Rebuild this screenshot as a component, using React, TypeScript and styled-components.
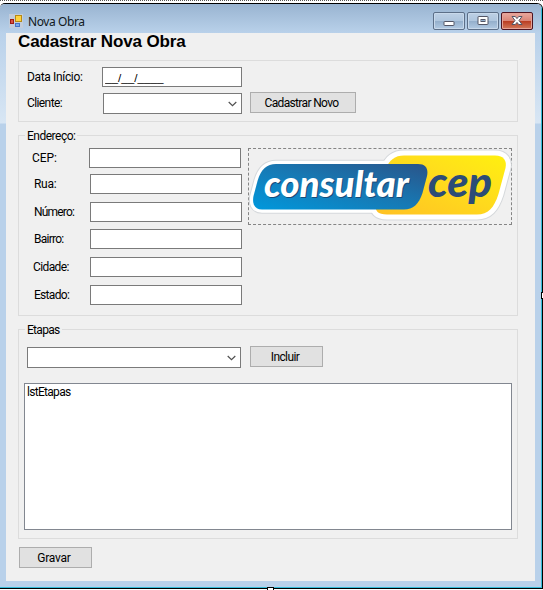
import React from "react";
import styled, { createGlobalStyle } from "styled-components";

const GlobalStyle = createGlobalStyle`
  * { box-sizing: border-box; }
  body { margin: 0; background: #fff; overflow: hidden; }
`;

const Designer = styled.div`
  position: relative;
  width: 543px;
  height: 590px;
  padding-top: 3px;
  background: #fff;
  font: 12px/14px Roboto, "Liberation Sans", sans-serif;
  color: #000;
  &::before {
    content: "";
    position: absolute;
    top: 0;
    left: 0;
    width: 100%;
    height: 1px;
    background: repeating-linear-gradient(90deg, #555 0 1px, #fff 1px 2px);
  }
`;

const WindowFrame = styled.div`
  height: 586px;
  border: solid #000;
  border-width: 1px 1px 1px 0;
  border-radius: 5px 6px 0 0;
  overflow: hidden;
`;

const FrameInner = styled.div`
  height: 584px;
  padding: 0 6px 6px;
  border-right: 1px solid #35bcd8;
  border-bottom: 1px solid #35bcd8;
  background: linear-gradient(#99b4d1 0, #b9d1ea 29px, #d8e6f4 119px, #b9d1ea 120px);
`;

const TitleBar = styled.header`
  display: flex;
  align-items: flex-start;
  height: 29px;
  padding: 8px 2px 0 3px;
`;

const AppIcon = styled.svg`
  width: 14px;
  height: 14px;
  margin-top: 2px;
`;

const Caption = styled.span`
  flex: 1;
  margin: 3px 0 0 5px;
  font-family: "Noto Sans", sans-serif;
  font-size: 12px;
  letter-spacing: -0.4px;
  color: #101820;
`;

const CaptionButtons = styled.div`
  display: flex;
  gap: 2px;
`;

const CaptionButton = styled.button<{ $close?: boolean }>`
  display: grid;
  place-items: center;
  width: 32px;
  height: 18px;
  padding: 0;
  border: 1px solid ${(p) => (p.$close ? "#4e1421" : "#5c6f88")};
  border-radius: 2px;
  box-shadow: inset 0 0 0 1px ${(p) => (p.$close ? "#e5a297" : "#c8d9eb")};
  background: ${(p) =>
    p.$close
      ? "linear-gradient(#e9a99f 0, #da8577 48%, #b83a20 50%, #d27a5c 100%)"
      : "linear-gradient(#bdd0e5 0, #afc6de 48%, #93aecb 50%, #b2cae3 100%)"};
  svg { display: block; }
`;

const Client = styled.main`
  height: 548px;
  padding: 0 17px 0 12px;
  background: #f0f0f0;
`;

const Heading = styled.h1`
  height: 27px;
  margin: 0;
  font: bold 17px/17px "Liberation Sans", Arial, sans-serif;
  letter-spacing: -0.13px;
  white-space: nowrap;
`;

const Group = styled.section<{ $height: number; $gap: number }>`
  position: relative;
  width: 500px;
  height: ${(p) => p.$height}px;
  margin-bottom: ${(p) => p.$gap}px;
  border: 1px solid #dcdcdc;
`;

const Legend = styled.span<{ $tracking: number }>`
  position: absolute;
  top: -7px;
  left: 6px;
  padding: 0 2px;
  background: #f0f0f0;
  letter-spacing: ${(p) => p.$tracking}px;
`;

const Row = styled.div<{ $top: number; $left?: number }>`
  display: flex;
  align-items: flex-start;
  margin-top: ${(p) => p.$top}px;
  padding-left: ${(p) => p.$left ?? 0}px;
`;

const Label = styled.label<{ $width: number; $tracking: number }>`
  width: ${(p) => p.$width}px;
  margin-top: 3px;
  letter-spacing: ${(p) => p.$tracking}px;
  white-space: nowrap;
`;

const Field = styled.input<{ $width: number }>`
  width: ${(p) => p.$width}px;
  height: 20px;
  padding: 0 2px;
  border: 1px solid #7a7a7a;
  border-radius: 0;
  background: #fff;
  color: #000;
  font: 11.7px/16px "Liberation Sans", Arial, sans-serif;
  outline: none;
`;

const ComboBox = styled.div<{ $width: number }>`
  display: flex;
  align-items: center;
  justify-content: flex-end;
  width: ${(p) => p.$width}px;
  height: 21px;
  padding-right: 4px;
  border: 1px solid #7a7a7a;
  background: #fff;
`;

const Button = styled.button<{ $width: number; $tracking: number; $left?: number; $lift?: number }>`
  width: ${(p) => p.$width}px;
  height: 21px;
  margin: ${(p) => -(p.$lift ?? 0)}px 0 0 ${(p) => p.$left ?? 0}px;
  padding: 2px 3px 0 0;
  border: 1px solid #adadad;
  background: #e1e1e1;
  color: #000;
  font: 12px/17px Roboto, sans-serif;
  letter-spacing: ${(p) => p.$tracking}px;
`;

const AddressBody = styled.div`
  display: flex;
  align-items: flex-start;
  padding-top: 12px;
`;

const AddressFields = styled.div`
  width: 229px;
`;

const AddressRow = styled.div<{ $gap: number; $left: number }>`
  display: flex;
  height: 20px;
  margin-bottom: ${(p) => p.$gap}px;
  padding-left: ${(p) => p.$left}px;
`;

const LookupButton = styled.button`
  width: 264px;
  height: 77px;
  padding: 0;
  border: 1px dashed #858585;
  background: #f0f0f0;
  svg { display: block; margin: -1px; }
`;

const ListBox = styled.div`
  width: 488px;
  height: 147px;
  margin: 15px 0 0 5px;
  padding: 1px 2px;
  border: 1px solid #828790;
  background: #fff;
  letter-spacing: -0.7px;
`;

const Handle = styled.i<{ $x: number; $y: number }>`
  position: absolute;
  left: ${(p) => p.$x}px;
  top: ${(p) => p.$y}px;
  width: 7px;
  height: 7px;
  border: 1px solid #000;
  background: #fff;
`;

const Chevron = () => (
  <svg width="9" height="6" viewBox="0 0 9 6">
    <path d="M0.7 1 L4.5 4.6 L8.3 1" fill="none" stroke="#505050" strokeWidth="1.2" />
  </svg>
);

const CepLogo = () => (
  <svg width="264" height="77" viewBox="248 148 264 77">
    <defs>
      <linearGradient id="blue" x1="0" y1="1" x2="1" y2="0">
        <stop offset="0" stopColor="#0098dc" />
        <stop offset="0.5" stopColor="#1779b4" />
        <stop offset="1" stopColor="#2a5489" />
      </linearGradient>
      <linearGradient id="yellow" x1="0" y1="1" x2="1" y2="0">
        <stop offset="0" stopColor="#ffc124" />
        <stop offset="0.65" stopColor="#ffe01b" />
        <stop offset="1" stopColor="#fff00f" />
      </linearGradient>
      <path id="cep" d="M404 155.500H495C504 155.500 507 161 505.500 168L498.500 194C494 208 488 214.500 477 214.500H387C378 214.500 374 211 376 202L386 169C389 160 395 155.500 404 155.500Z" />
      <path id="consultar" d="M276 164H418C426 164 428.500 169 427 176L422.500 193C419 204 413 209.500 404 209.500H262C254 209.500 252 203 253.500 196L257.500 181C261 169 267 164 276 164Z" />
    </defs>
    <g strokeLinejoin="round">
      <g fill="#d5d8db" stroke="#d5d8db">
        <use href="#cep" strokeWidth="12" />
        <use href="#consultar" strokeWidth="8.500" />
      </g>
      <g fill="#fff" stroke="#fff">
        <use href="#cep" strokeWidth="10" />
        <use href="#consultar" strokeWidth="6.500" />
      </g>
    </g>
    <use href="#cep" fill="url(#yellow)" />
    <use href="#consultar" fill="url(#blue)" />
    <g fontFamily="Lato, sans-serif" fontWeight="900" fontStyle="italic">
      <text x="265" y="198" fontSize="35.500" textLength="145" lengthAdjust="spacingAndGlyphs" fill="#164c7a">consultar</text>
      <text x="264" y="197" fontSize="35.500" textLength="145" lengthAdjust="spacingAndGlyphs" fill="#fff">consultar</text>
      <text x="428" y="196.500" fontSize="41.500" textLength="64" lengthAdjust="spacingAndGlyphs" fill="#2c4c77">cep</text>
    </g>
  </svg>
);

const addressFields = [
  { label: "CEP:", left: 13, width: 57, gap: 6, tracking: -0.1 },
  { label: "Rua:", left: 15, width: 56, gap: 8, tracking: -0.3 },
  { label: "Número:", left: 15, width: 56, gap: 7, tracking: -0.8 },
  { label: "Bairro:", left: 15, width: 56, gap: 8, tracking: -0.75 },
  { label: "Cidade:", left: 14, width: 57, gap: 8, tracking: -0.6 },
  { label: "Estado:", left: 15, width: 56, gap: 0, tracking: -0.7 },
];

export default function App() {
  return (
    <Designer>
      <GlobalStyle />
      <WindowFrame>
        <FrameInner>
          <TitleBar>
            <AppIcon viewBox="0 0 14 14">
              <rect width="14" height="14" fill="#c3cddb" />
              <rect x="6.500" y="1.500" width="6" height="6" fill="#ffd23d" stroke="#b58a16" />
              <rect x="1.500" y="5.500" width="3" height="4" fill="#d95040" stroke="#9d1c14" />
              <rect x="6.500" y="9.500" width="4" height="3" fill="#7ba9ef" stroke="#4775c4" />
            </AppIcon>
            <Caption>Nova Obra</Caption>
            <CaptionButtons>
              <CaptionButton aria-label="Minimizar">
                <svg width="12" height="14" viewBox="0 0 12 14">
                  <rect x="1" y="7.500" width="10" height="4" rx="0.500" fill="#fff" stroke="#535666" />
                </svg>
              </CaptionButton>
              <CaptionButton aria-label="Maximizar">
                <svg width="12" height="12" viewBox="0 0 12 12">
                  <rect x="1" y="1.500" width="10" height="8" rx="0.500" fill="#fff" stroke="#535666" />
                  <rect x="4" y="4.500" width="4" height="2" fill="#93aecb" stroke="#535666" />
                </svg>
              </CaptionButton>
              <CaptionButton $close aria-label="Fechar">
                <svg width="12" height="12" viewBox="0 0 12 12">
                  <path d="M1 1.500H4.300L6 3.600L7.700 1.500H11L8 5.500L11 9.500H7.700L6 7.400L4.300 9.500H1L4 5.500Z" fill="#fff" stroke="#535666" />
                </svg>
              </CaptionButton>
            </CaptionButtons>
          </TitleBar>
          <Client>
            <Heading>Cadastrar Nova Obra</Heading>
            <Group $height={62} $gap={13}>
              <Row $top={6} $left={8}>
                <Label $width={75} $tracking={-0.35}>Data Início:</Label>
                <Field $width={140} defaultValue="__/__/____" />
              </Row>
              <Row $top={6} $left={8}>
                <Label $width={76} $tracking={-0.6}>Cliente:</Label>
                <ComboBox $width={139}><Chevron /></ComboBox>
                <Button $width={106} $left={8} $lift={1} $tracking={-0.65}>Cadastrar Novo</Button>
              </Row>
            </Group>
            <Group $height={181} $gap={13}>
              <Legend $tracking={-0.5}>Endereço:</Legend>
              <AddressBody>
                <AddressFields>
                  {addressFields.map((f) => (
                    <AddressRow key={f.label} $gap={f.gap} $left={f.left}>
                      <Label $width={f.width} $tracking={f.tracking}>{f.label}</Label>
                      <Field $width={152} />
                    </AddressRow>
                  ))}
                </AddressFields>
                <LookupButton aria-label="Consultar CEP"><CepLogo /></LookupButton>
              </AddressBody>
            </Group>
            <Group $height={210} $gap={8}>
              <Legend $tracking={-0.7}>Etapas</Legend>
              <Row $top={17} $left={8}>
                <ComboBox $width={214}><Chevron /></ComboBox>
                <Button $width={73} $left={9} $lift={1} $tracking={-0.6}>Incluir</Button>
              </Row>
              <ListBox>lstEtapas</ListBox>
            </Group>
            <Button $width={73} $left={1} $tracking={-0.25}>Gravar</Button>
          </Client>
        </FrameInner>
      </WindowFrame>
      <Handle $x={541} $y={292} />
      <Handle $x={267} $y={587} />
    </Designer>
  );
}
